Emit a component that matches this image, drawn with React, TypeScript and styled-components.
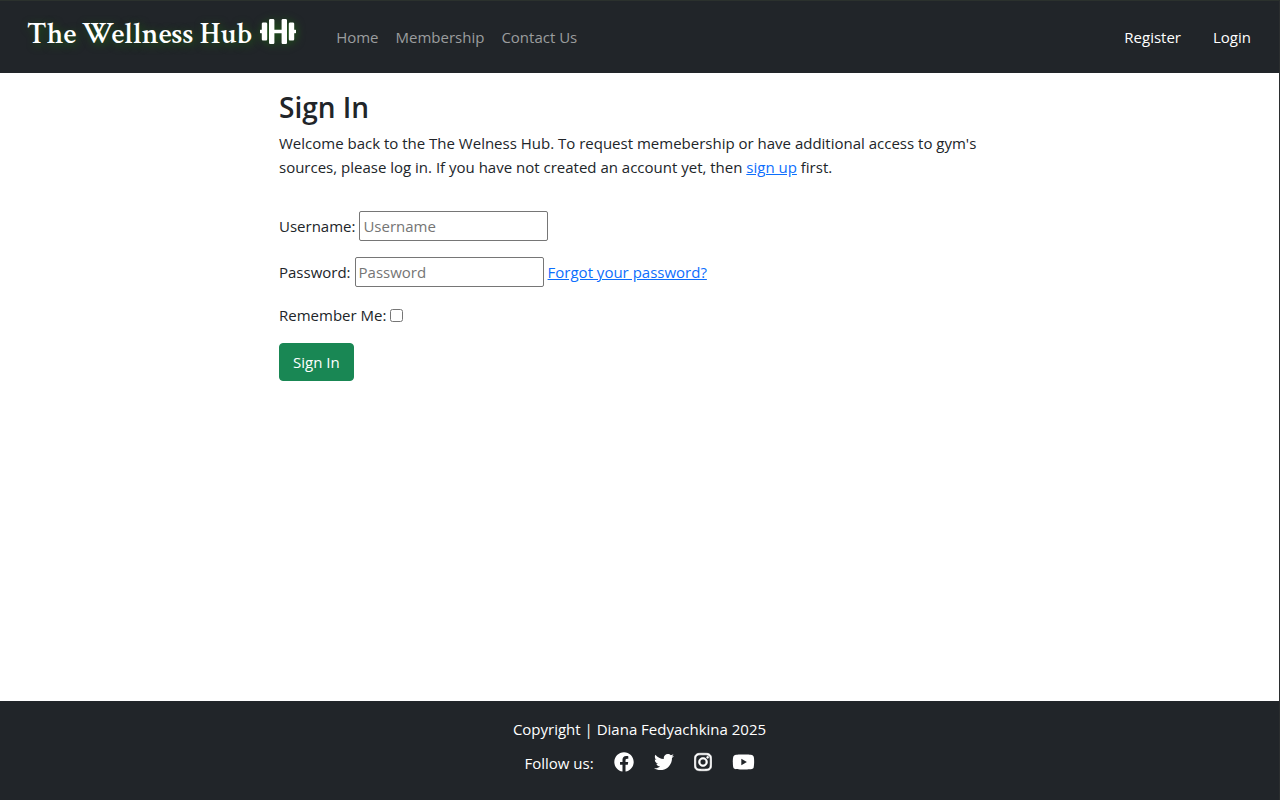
import React from "react";
import styled, { createGlobalStyle } from "styled-components";
import { FaDumbbell, FaFacebook, FaInstagram, FaTwitter, FaYoutube } from "react-icons/fa";

const GlobalStyle = createGlobalStyle`
  *, *::before, *::after { box-sizing: border-box; }
  body {
    margin: 0;
    background: #fff;
    color: #212529;
    font-family: "Segoe UI", "Open Sans", "Noto Sans", sans-serif;
    font-size: 15px;
    line-height: 24px;
  }
`;

const Page = styled.div`
  display: flex;
  flex-direction: column;
  min-height: 100vh;
  border-top: 1px solid #2b312d;
  border-right: 1px solid #2b2e2f;
`;

const Header = styled.header`
  display: flex;
  align-items: center;
  height: 72px;
  padding: 0 28px 0 27px;
  background: #212529;
`;

const Brand = styled.a`
  display: flex;
  align-items: center;
  gap: 8px;
  margin-right: 40px;
  padding-bottom: 5px;
  color: #fff;
  font-family: "Crimson Text", "Liberation Serif", serif;
  font-size: 30px;
  font-weight: 600;
  line-height: 36px;
  text-decoration: none;
  text-shadow: 2px 2px 8px #1d5a14;
  white-space: nowrap;

  svg {
    width: 36px;
    height: 29px;
    margin-bottom: 6px;
    filter: drop-shadow(1px 1px 4px #1d5a14);
  }
`;

const Nav = styled.nav<{ $gap: number }>`
  display: flex;
  gap: ${(p) => p.$gap}px;
`;

const NavLink = styled.a<{ $bright?: boolean }>`
  color: ${(p) => (p.$bright ? "#fff" : "#9b9d9e")};
  text-decoration: none;
  white-space: nowrap;
`;

const Spacer = styled.div`
  flex: 1;
`;

const Main = styled.main`
  flex: 1;
  width: 100%;
  max-width: 721px;
  margin: 0 auto;
  padding-top: 17px;
`;

const Title = styled.h1`
  margin: 0 0 7px;
  font-size: 28px;
  font-weight: 600;
  line-height: 34px;
`;

const Intro = styled.p`
  margin: 0 0 32px;
`;

const Link = styled.a`
  color: #0d6efd;
`;

const Form = styled.form`
  display: flex;
  flex-direction: column;
  align-items: flex-start;
  gap: 16px;
`;

const Field = styled.div`
  display: flex;
  align-items: center;
  gap: 4px;
`;

const TextInput = styled.input`
  width: 189px;
  height: 30px;
  padding: 1px 3px;
  border: 1px solid #767676;
  border-radius: 2px;
  background: #fff;
  color: #212529;
  font: inherit;

  &::placeholder {
    color: #757575;
    opacity: 1;
  }
`;

const Checkbox = styled.input`
  width: 13px;
  height: 13px;
  margin: 0;
`;

const SubmitButton = styled.button`
  padding: 6px 13px;
  border: 1px solid #198754;
  border-radius: 4px;
  background: #198754;
  color: #fff;
  font: inherit;
`;

const Footer = styled.footer`
  display: flex;
  flex-direction: column;
  align-items: center;
  gap: 10px;
  padding: 16px 0 25px;
  background: #212529;
  color: #fff;
`;

const Social = styled.div`
  display: flex;
  align-items: center;
  gap: 20px;
`;

const SocialLink = styled.a<{ $width: number; $stroke?: number }>`
  display: flex;
  padding-bottom: 3px;
  color: #fff;

  svg {
    width: ${(p) => p.$width}px;
    height: 20px;
    stroke-width: ${(p) => p.$stroke ?? 0};
  }
`;

const socials = [
  { name: "Facebook", Icon: FaFacebook, width: 20 },
  { name: "Twitter", Icon: FaTwitter, width: 20 },
  { name: "Instagram", Icon: FaInstagram, width: 18, stroke: 16 },
  { name: "YouTube", Icon: FaYoutube, width: 23 },
];

export default function App() {
  return (
    <>
      <GlobalStyle />
      <Page>
        <Header>
          <Brand href="#">
            <span>The Wellness Hub</span>
            <FaDumbbell aria-hidden />
          </Brand>
          <Nav $gap={17}>
            <NavLink href="#">Home</NavLink>
            <NavLink href="#">Membership</NavLink>
            <NavLink href="#">Contact Us</NavLink>
          </Nav>
          <Spacer />
          <Nav $gap={32}>
            <NavLink href="#" $bright>Register</NavLink>
            <NavLink href="#" $bright>Login</NavLink>
          </Nav>
        </Header>
        <Main>
          <Title>Sign In</Title>
          <Intro>
            Welcome back to the The Welness Hub. To request memebership or have additional access to gym's
            sources, please log in. If you have not created an account yet, then <Link href="#">sign up</Link> first.
          </Intro>
          <Form onSubmit={(e) => e.preventDefault()}>
            <Field>
              <label htmlFor="username">Username:</label>
              <TextInput id="username" type="text" placeholder="Username" />
            </Field>
            <Field>
              <label htmlFor="password">Password:</label>
              <TextInput id="password" type="password" placeholder="Password" />
              <Link href="#">Forgot your password?</Link>
            </Field>
            <Field>
              <label htmlFor="remember">Remember Me:</label>
              <Checkbox id="remember" type="checkbox" />
            </Field>
            <SubmitButton type="submit">Sign In</SubmitButton>
          </Form>
        </Main>
        <Footer>
          <span>Copyright | Diana Fedyachkina 2025</span>
          <Social>
            <span>Follow us:</span>
            {socials.map(({ name, Icon, width, stroke }) => (
              <SocialLink key={name} href="#" aria-label={name} $width={width} $stroke={stroke}>
                <Icon aria-hidden />
              </SocialLink>
            ))}
          </Social>
        </Footer>
      </Page>
    </>
  );
}
